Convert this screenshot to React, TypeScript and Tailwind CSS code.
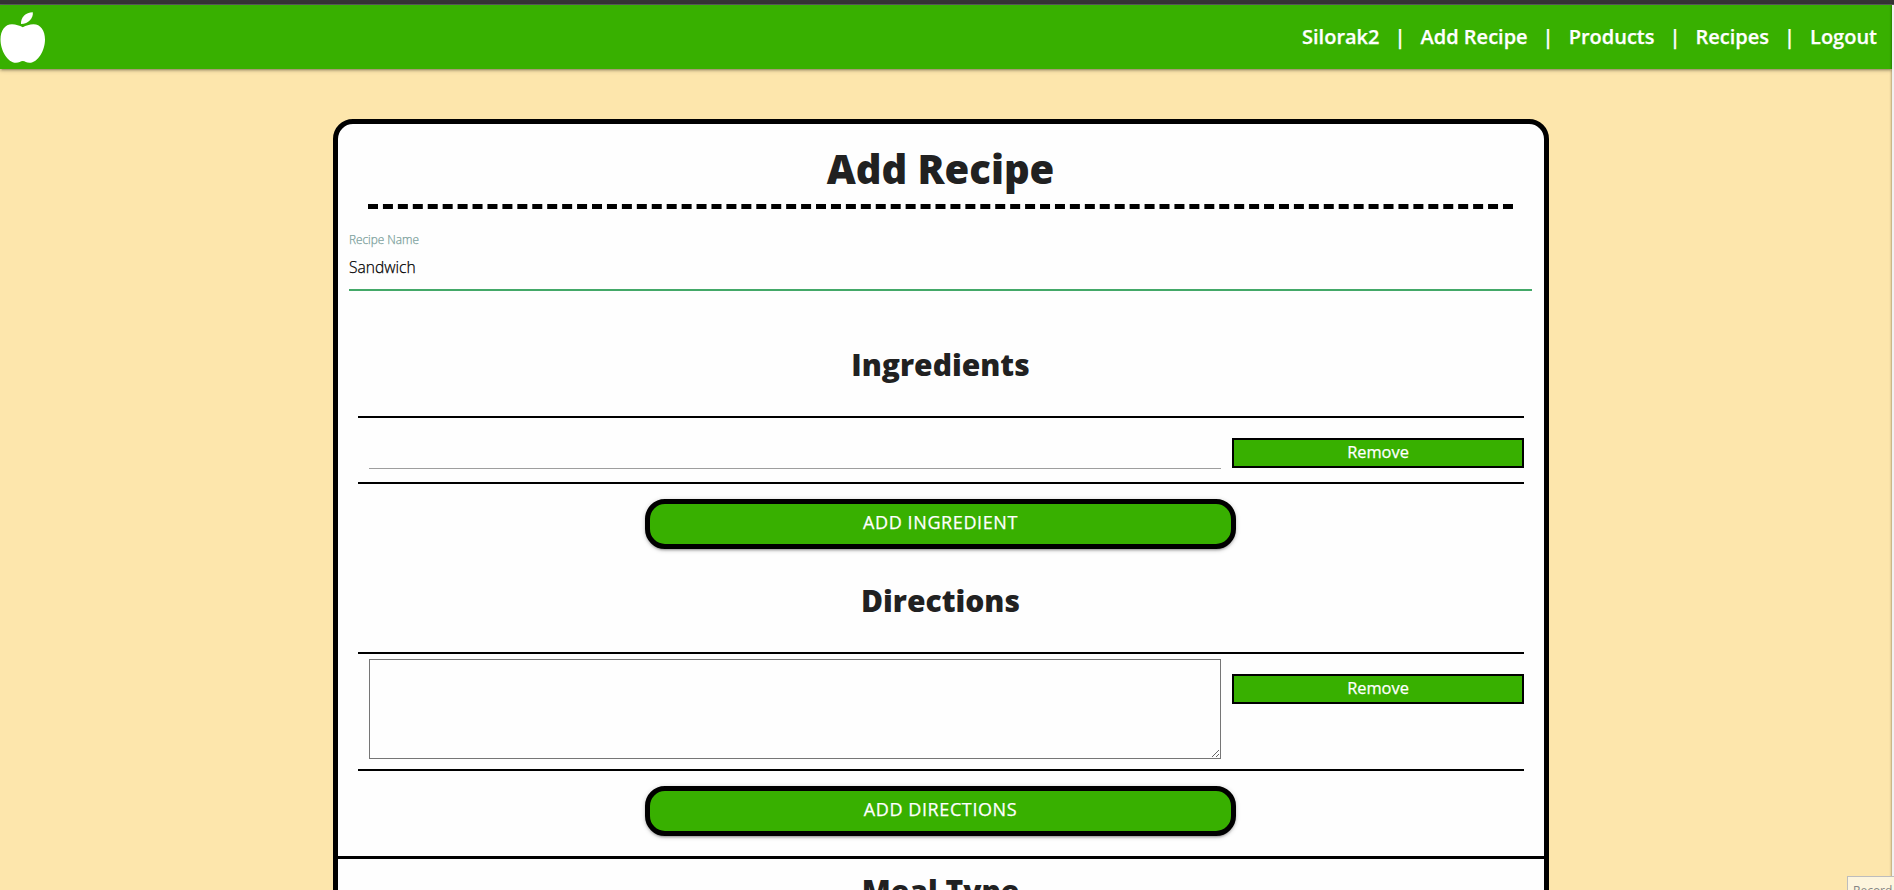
import type { ReactNode } from "react";

const links = ["Silorak2", "Add Recipe", "Products", "Recipes", "Logout"];

function Apple() {
  return (
    <svg className="mt-[2px] block h-[52px] w-[46px]" viewBox="0 0 46 52" fill="#fff">
      <path d="M21 12C20.500 5.500 25.500 0.300 32.800 0.200C33.500 6 28.500 12 21 12Z" />
      <path d="M22.800 15.200C26 13.800 29.500 12.300 33.500 12.300C40.500 12.300 45 18.500 45 27.500C45 38.500 38 50.800 29.500 50.800C26.500 50.800 25 49 22.800 49C20.600 49 19 50.800 16 50.800C7.500 50.800 .5 38.500 .5 27.500C.5 18.500 5 12.300 12 12.300C16 12.300 19.500 13.800 22.800 15.200Z" />
    </svg>
  );
}

function Heading({ children }: { children: ReactNode }) {
  return <h2 className="pr-px text-center text-[30px] leading-[42px] font-extrabold">{children}</h2>;
}

function Remove() {
  return (
    <button className="h-[30px] w-[292px] border-2 border-black bg-[#38b000] pb-[2px] text-[16.4px] leading-6 font-medium text-white [-webkit-text-stroke:0.25px_white]">
      Remove
    </button>
  );
}

function AddButton({ children }: { children: ReactNode }) {
  return (
    <button className="ml-[287px] block h-[50px] w-[591px] rounded-[20px] border-[5px] border-black bg-[#38b000] pb-[5px] text-[18px] leading-[34px] font-medium tracking-[0.6px] text-white uppercase shadow-[0_2px_2px_0_rgba(0,0,0,0.14),0_3px_1px_-2px_rgba(0,0,0,0.12),0_1px_5px_0_rgba(0,0,0,0.2)] [-webkit-text-stroke:0.25px_white]">
      {children}
    </button>
  );
}

export default function App() {
  return (
    <div className="relative flex h-[890px] w-full flex-col overflow-hidden bg-[#fde6ac] font-['Open_Sans',sans-serif] text-[#212121]">
      <div className="h-[5px] shrink-0 border-b border-[#5c5c5c] bg-[#353535]" />
      <div className="flex min-h-0 flex-1">
        <div className="min-w-0 flex-1">
          <header className="flex h-16 items-center justify-between bg-[#38b000] pr-[15px] shadow-[0_2px_2px_0_rgba(0,0,0,0.14),0_3px_1px_-2px_rgba(0,0,0,0.12),0_1px_5px_0_rgba(0,0,0,0.2)]">
            <Apple />
            <nav className="flex text-xl font-semibold text-white [-webkit-text-stroke:0.25px_white]">
              {links.map((link, i) => (
                <span key={link} className="flex">
                  {i > 0 && <span className="w-[41px] text-center">|</span>}
                  <a>{link}</a>
                </span>
              ))}
            </nav>
          </header>
          <main className="mt-[50px] ml-[333px] h-[900px] w-[1216px] rounded-t-[20px] border-[5px] border-black bg-[#fefefe]">
            <h1 className="pt-[17px] pr-px text-center text-[40px] leading-[56px] font-extrabold">Add Recipe</h1>
            <svg className="mt-[7px] ml-[30px] block h-[5px] w-[1145px]">
              <line x1="0" y1="2.5" x2="1145" y2="2.5" stroke="#000" strokeWidth="5" strokeDasharray="10 4.934" />
            </svg>
            <div className="mt-[21px] ml-[11px] flex h-[61px] w-[1183px] flex-col border-b-2 border-[#43a868]">
              <label className="text-[11.8px] leading-[18px] font-light text-[#7c9f9c] [-webkit-text-stroke:0.25px_#7c9f9c]">
                Recipe Name
              </label>
              <span className="mt-[7px] text-[15.6px] leading-6 font-light text-black [-webkit-text-stroke:0.25px_black]">
                Sandwich
              </span>
            </div>
            <section className="mx-5 mt-[53px]">
              <Heading>Ingredients</Heading>
              <div className="mt-[30px] flex h-[68px] border-y-2 border-black">
                <div className="ml-[11px] h-[51px] w-[852px] border-b border-[#9e9e9e]" />
                <div className="mt-5 ml-[11px]">
                  <Remove />
                </div>
              </div>
              <div className="mt-[15px]">
                <AddButton>Add Ingredient</AddButton>
              </div>
            </section>
            <section className="mx-5 mt-[31px]">
              <Heading>Directions</Heading>
              <div className="mt-[30px] flex h-[119px] border-y-2 border-black">
                <textarea className="mt-[5px] ml-[11px] h-[100px] w-[852px] resize border border-[#767676]" />
                <div className="mt-5 ml-[11px]">
                  <Remove />
                </div>
              </div>
              <div className="mt-[15px]">
                <AddButton>Add Directions</AddButton>
              </div>
            </section>
            <section className="mt-5 border-t-[3px] border-black pt-[11px]">
              <Heading>Meal Type</Heading>
            </section>
          </main>
        </div>
        <div className="w-[2px] bg-[#f1f1f1] shadow-[-1px_0_2px_rgba(0,0,0,0.3)]" />
      </div>
      <div className="absolute top-[876px] left-[1847px] h-8 w-20 border border-[#bdbdbd] bg-[#fdf5dd] pt-[5px] pl-[5px] text-xs leading-[17px] text-[#858585]">
        Record
      </div>
    </div>
  );
}
